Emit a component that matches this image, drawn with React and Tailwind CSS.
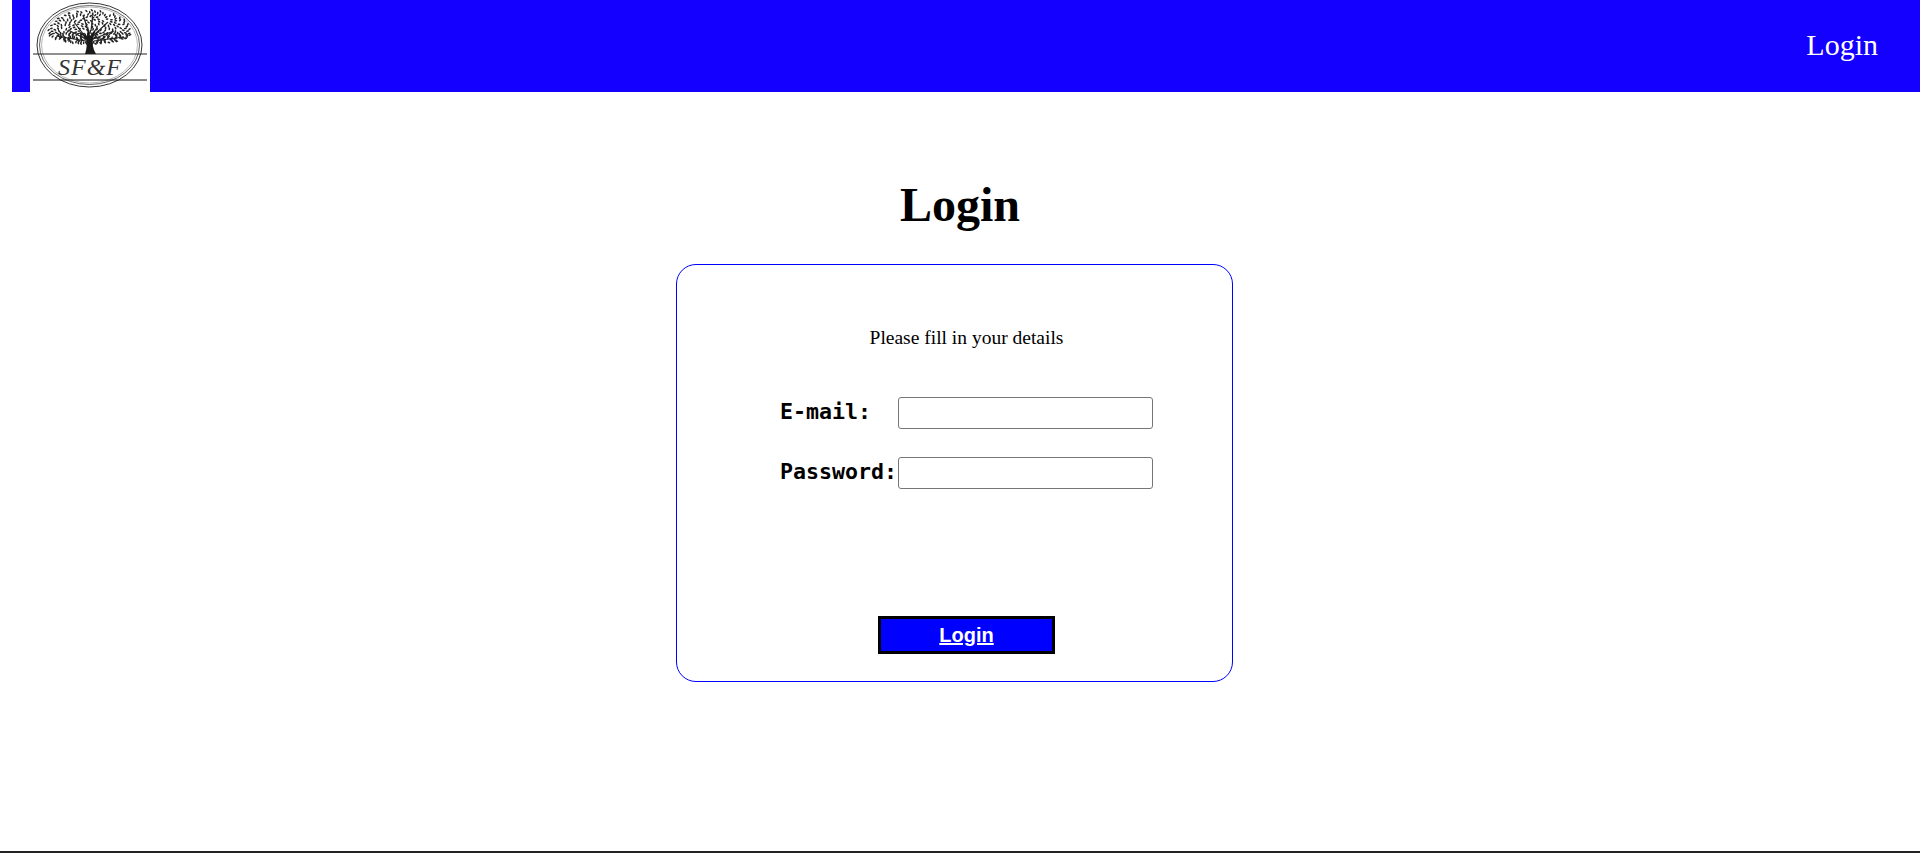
const leaves = []
for (let i = 0; i < 330; i++) {
  const a = i * 2.399963
  const r = Math.sqrt(i / 330)
  const up = Math.sin(a) < 0
  const x = 60 + Math.cos(a) * r * 42
  const y = 33 + Math.sin(a) * r * (up ? 23 : 11)
  if (Math.sin(x * 0.55) * Math.cos(y * 0.7) < 0.45) leaves.push([x, y, a])
}

function Logo() {
  return (
    <svg width="120" height="92" viewBox="0 0 120 92" className="block">
      <ellipse cx="59.5" cy="45" rx="52.5" ry="42" fill="none" stroke="#333" strokeWidth="1" />
      <ellipse cx="59.5" cy="45" rx="50" ry="39.5" fill="none" stroke="#666" strokeWidth="1" />
      <ellipse cx="59.5" cy="45" rx="48" ry="38" fill="none" stroke="#999" strokeWidth="0.7" />
      {leaves.map(([x, y, a], i) => (
        <ellipse key={i} cx={x} cy={y} rx="1.5" ry="0.8" fill="#222" transform={`rotate(${(a * 57) % 180} ${x} ${y})`} />
      ))}
      <path d="M55 54 C57 48 57 44 56 39 L50 32 L57 36 L58 26 L60 36 L67 27 L63 38 C62 44 63 49 66 54 Z" fill="#1a1a1a" />
      <path d="M56 39 L38 30 M54 35 L44 22 M58 30 L53 15 M61 31 L63 14 M63 36 L78 22 M63 39 L84 31 M56 41 L26 36 M64 41 L94 37" stroke="#222" strokeWidth="1.2" fill="none" />
      <path d="M3 54 H117" stroke="#222" strokeWidth="1.2" />
      <path d="M3 80 H117" stroke="#111" strokeWidth="1" />
      <text x="60" y="75" textAnchor="middle" fontFamily="Liberation Serif, serif" fontStyle="italic" fontSize="24" letterSpacing="1" fill="#333">SF&amp;F</text>
    </svg>
  )
}

export default function App() {
  return (
    <div className="min-h-screen flex flex-col bg-white text-black font-['Liberation_Serif',serif]">
      <nav className="ml-3 h-[92px] bg-[#1400ff] flex items-start justify-between pl-[18px] pr-[42px]">
        <div className="bg-white w-[120px] h-[92px]">
          <Logo />
        </div>
        <a className="text-[30px] leading-[34px] text-white mt-[28px]">Login</a>
      </nav>
      <main className="flex flex-col items-center flex-1">
        <h1 className="text-[48px] leading-[55px] font-bold mt-[85px] text-center">Login</h1>
        <div className="mt-[32px] mr-[11px] w-[557px] h-[418px] border border-[#0000ff] rounded-[20px] pl-[24px] flex flex-col items-center">
          <p className="text-[19.5px] leading-[22px] mt-[62px]">Please fill in your details</p>
          <div className="mt-[48px] flex items-center w-[375px] h-[32px]">
            <label className="w-[119px] pl-[1px] pb-[2px] font-['DejaVu_Sans_Mono',monospace] font-bold text-[21.6px] leading-[26px]">E-mail:</label>
            <input type="text" className="w-[255px] h-[32px] border border-[#767676] rounded-[3px]" />
          </div>
          <div className="mt-[28px] flex items-center w-[375px] h-[32px]">
            <label className="w-[119px] pl-[1px] pb-[2px] font-['DejaVu_Sans_Mono',monospace] font-bold text-[21.6px] leading-[26px]">Password:</label>
            <input type="password" className="w-[255px] h-[32px] border border-[#767676] rounded-[3px]" />
          </div>
          <button className="mt-[127px] w-[177px] h-[38px] bg-[#0000ff] border-[3px] border-black text-white underline font-bold font-['Liberation_Sans',sans-serif] text-[20px] leading-[23px]">
            Login
          </button>
        </div>
      </main>
      <footer className="h-[2px] bg-[#222222]"></footer>
    </div>
  )
}
